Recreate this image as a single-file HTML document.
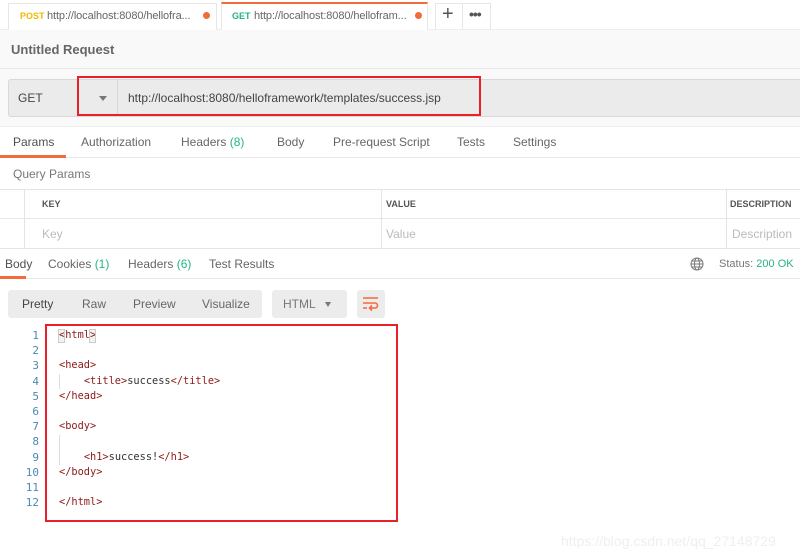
<!DOCTYPE html>
<html><head><style>
*{margin:0;padding:0;box-sizing:border-box}
body{width:800px;height:560px;position:relative;font-family:"Liberation Sans",sans-serif;background:#fff;overflow:hidden;color:#505050}
.a{position:absolute}
.t{font-size:12px;white-space:nowrap}
.g{color:#26b47f}
</style></head><body>
<div class="a" style="left:0;top:0;width:800px;height:30px;background:#fff;border-bottom:1px solid #eee"></div>
<div class="a" style="left:8px;top:3px;width:209px;height:28px;border:1px solid #e6e6e6;border-bottom:none;background:#fff"></div>
<div class="a t" style="left:20px;top:11px;font-size:9px;font-weight:bold;color:#f5b800">POST</div>
<div class="a t" style="left:47px;top:10px;font-size:11px;color:#666;letter-spacing:-0.1px">http://localhost:8080/hellofra...</div>
<div class="a" style="left:203px;top:12px;width:7px;height:7px;border-radius:50%;background:#f26b3a"></div>
<div class="a" style="left:221px;top:2px;width:207px;height:29px;border:1px solid #e6e6e6;border-top:2px solid #f26b3a;border-bottom:none;background:#fff"></div>
<div class="a t" style="left:232px;top:11px;font-size:9px;font-weight:bold;color:#26b47f">GET</div>
<div class="a t" style="left:254px;top:10px;font-size:11px;color:#666;letter-spacing:-0.1px">http://localhost:8080/hellofram...</div>
<div class="a" style="left:415px;top:12px;width:7px;height:7px;border-radius:50%;background:#f26b3a"></div>
<div class="a" style="left:435px;top:3px;width:56px;height:28px;border:1px solid #e6e6e6;border-bottom:none"></div>
<div class="a" style="left:462px;top:3px;width:1px;height:26px;background:#e6e6e6"></div>
<div class="a t" style="left:442px;top:3px;font-size:20px;color:#555">+</div>
<div class="a t" style="left:469px;top:6px;font-size:14px;font-weight:bold;color:#555;letter-spacing:-1px">•••</div>
<div class="a" style="left:0;top:30px;width:800px;height:96px;background:#f9f9f9"></div>
<div class="a t" style="left:11px;top:42px;font-size:13px;font-weight:bold;color:#666">Untitled Request</div>
<div class="a" style="left:0;top:68px;width:800px;height:1px;background:#e8e8e8"></div>
<div class="a" style="left:8px;top:79px;width:800px;height:38px;background:#ebebeb;border:1px solid #d8d8d8;border-radius:3px"></div>
<div class="a" style="left:117px;top:80px;width:1px;height:36px;background:#d8d8d8"></div>
<div class="a t" style="left:18px;top:91px;font-size:12px;color:#444">GET</div>
<div class="a" style="left:99px;top:96px;border-left:4px solid transparent;border-right:4px solid transparent;border-top:5px solid #777"></div>
<div class="a t" style="left:128px;top:91px;font-size:12px;color:#444">http://localhost:8080/helloframework/templates/success.jsp</div>
<div class="a" style="left:77px;top:76px;width:404px;height:40px;border:2px solid #e8202a"></div>
<div class="a" style="left:0;top:126px;width:800px;height:1px;background:#eee"></div>
<div class="a" style="left:0;top:157px;width:800px;height:1px;background:#e8e8e8"></div>
<div class="a t" style="left:13px;top:135px">Params</div>
<div class="a" style="left:0;top:155px;width:66px;height:3px;background:#f26b3a"></div>
<div class="a t" style="left:81px;top:135px;color:#666">Authorization</div>
<div class="a t" style="left:181px;top:135px;color:#666">Headers <span class="g">(8)</span></div>
<div class="a t" style="left:277px;top:135px;color:#666">Body</div>
<div class="a t" style="left:333px;top:135px;color:#666">Pre-request Script</div>
<div class="a t" style="left:457px;top:135px;color:#666">Tests</div>
<div class="a t" style="left:513px;top:135px;color:#666">Settings</div>
<div class="a t" style="left:13px;top:167px;color:#777">Query Params</div>
<div class="a" style="left:0;top:189px;width:800px;height:60px;border-top:1px solid #e4e4e4;border-bottom:1px solid #e4e4e4"></div>
<div class="a" style="left:0;top:218px;width:800px;height:1px;background:#e8e8e8"></div>
<div class="a" style="left:24px;top:189px;width:1px;height:60px;background:#e4e4e4"></div>
<div class="a" style="left:381px;top:189px;width:1px;height:60px;background:#e4e4e4"></div>
<div class="a" style="left:726px;top:189px;width:1px;height:60px;background:#e4e4e4"></div>
<div class="a t" style="left:42px;top:199px;font-size:9px;font-weight:bold;color:#555">KEY</div>
<div class="a t" style="left:386px;top:199px;font-size:9px;font-weight:bold;color:#555">VALUE</div>
<div class="a t" style="left:730px;top:199px;font-size:9px;font-weight:bold;color:#555">DESCRIPTION</div>
<div class="a t" style="left:42px;top:227px;color:#bbb">Key</div>
<div class="a t" style="left:386px;top:227px;color:#bbb">Value</div>
<div class="a t" style="left:732px;top:227px;color:#bbb">Description</div>
<div class="a" style="left:0;top:278px;width:800px;height:1px;background:#e8e8e8"></div>
<div class="a t" style="left:5px;top:257px">Body</div>
<div class="a" style="left:0;top:276px;width:26px;height:3px;background:#f26b3a"></div>
<div class="a t" style="left:48px;top:257px;color:#666">Cookies <span class="g">(1)</span></div>
<div class="a t" style="left:128px;top:257px;color:#666">Headers <span class="g">(6)</span></div>
<div class="a t" style="left:209px;top:257px;color:#666">Test Results</div>
<svg class="a" style="left:690px;top:257px" width="14" height="14" viewBox="0 0 14 14" fill="none" stroke="#777" stroke-width="1"><circle cx="7" cy="7" r="6"/><ellipse cx="7" cy="7" rx="2.5" ry="6"/><path d="M1 7h12M2 4h10M2 10h10"/></svg>
<div class="a t" style="left:719px;top:258px;font-size:11px;color:#777">Status: <span class="g">200 OK</span></div>
<div class="a" style="left:8px;top:290px;width:254px;height:28px;background:#ececec;border-radius:3px"></div>
<div class="a t" style="left:22px;top:297px;color:#444">Pretty</div>
<div class="a t" style="left:82px;top:297px;color:#666">Raw</div>
<div class="a t" style="left:133px;top:297px;color:#666">Preview</div>
<div class="a t" style="left:202px;top:297px;color:#666">Visualize</div>
<div class="a" style="left:272px;top:290px;width:75px;height:28px;background:#ececec;border-radius:3px"></div>
<div class="a t" style="left:283px;top:297px;color:#777">HTML</div>
<div class="a" style="left:325px;top:302px;border-left:3.5px solid transparent;border-right:3.5px solid transparent;border-top:5px solid #777"></div>
<div class="a" style="left:357px;top:290px;width:28px;height:28px;background:#ececec;border-radius:3px"></div>
<svg class="a" style="left:362px;top:296px" width="18" height="16" viewBox="0 0 18 16" fill="none" stroke="#f26b3a" stroke-width="1.6"><path d="M1 2h15M1 7h12a2.5 2.5 0 0 1 0 5H8M10 9.5l-2.5 2.5 2.5 2.5M1 12h4"/></svg>
<div class="a" style="left:45px;top:324px;width:353px;height:198px;border:2px solid #e8202a"></div>
<div class="a" style="left:0;top:328px;font-family:'DejaVu Sans Mono','Liberation Mono',monospace;font-size:11px;line-height:15.2px;color:#4a8ab0;text-align:right;width:39px">1<br>2<br>3<br>4<br>5<br>6<br>7<br>8<br>9<br>10<br>11<br>12</div>
<div class="a" style="left:59px;top:328px;font-family:'DejaVu Sans Mono','Liberation Mono',monospace;font-size:10.3px;line-height:15.2px;color:#333;white-space:pre"><span style="color:#8b1a1a">&lt;html&gt;</span>

<span style="color:#8b1a1a">&lt;head&gt;</span>
    <span style="color:#8b1a1a">&lt;title&gt;</span>success<span style="color:#8b1a1a">&lt;/title&gt;</span>
<span style="color:#8b1a1a">&lt;/head&gt;</span>

<span style="color:#8b1a1a">&lt;body&gt;</span>

    <span style="color:#8b1a1a">&lt;h1&gt;</span>success!<span style="color:#8b1a1a">&lt;/h1&gt;</span>
<span style="color:#8b1a1a">&lt;/body&gt;</span>

<span style="color:#8b1a1a">&lt;/html&gt;</span></div>
<div class="a" style="left:58px;top:329px;width:7px;height:14px;border:1px solid #ccc;background:rgba(0,0,0,.05)"></div>
<div class="a" style="left:89px;top:329px;width:7px;height:14px;border:1px solid #ccc;background:rgba(0,0,0,.05)"></div>
<div class="a" style="left:59px;top:374px;width:1px;height:15px;background:#ddd"></div>
<div class="a" style="left:59px;top:435px;width:1px;height:30px;background:#ddd"></div>
<div class="a t" style="left:561px;top:533px;font-size:14px;color:#efefef">https://blog.csdn.net/qq_27148729</div>
</body></html>
